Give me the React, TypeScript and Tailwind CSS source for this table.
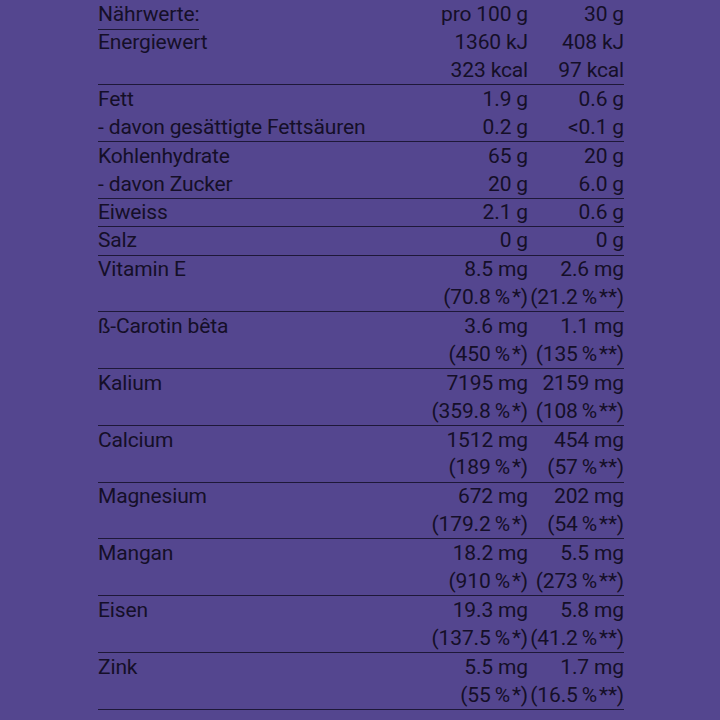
import React from 'react';

type Row = [string, string, string];

const groups: Row[][] = [
  [
    ['Energiewert', '1360 kJ', '408 kJ'],
    ['', '323 kcal', '97 kcal'],
  ],
  [
    ['Fett', '1.9 g', '0.6 g'],
    ['- davon gesättigte Fettsäuren', '0.2 g', '<0.1 g'],
  ],
  [
    ['Kohlenhydrate', '65 g', '20 g'],
    ['- davon Zucker', '20 g', '6.0 g'],
  ],
  [['Eiweiss', '2.1 g', '0.6 g']],
  [['Salz', '0 g', '0 g']],
  [
    ['Vitamin E', '8.5 mg', '2.6 mg'],
    ['', '(70.8\u2009%\u200a*)', '(21.2\u2009%\u200a**)'],
  ],
  [
    ['ß-Carotin bêta', '3.6 mg', '1.1 mg'],
    ['', '(450\u2009%\u200a*)', '(135\u2009%\u200a**)'],
  ],
  [
    ['Kalium', '7195 mg', '2159 mg'],
    ['', '(359.8\u2009%\u200a*)', '(108\u2009%\u200a**)'],
  ],
  [
    ['Calcium', '1512 mg', '454 mg'],
    ['', '(189\u2009%\u200a*)', '(57\u2009%\u200a**)'],
  ],
  [
    ['Magnesium', '672 mg', '202 mg'],
    ['', '(179.2\u2009%\u200a*)', '(54\u2009%\u200a**)'],
  ],
  [
    ['Mangan', '18.2 mg', '5.5 mg'],
    ['', '(910\u2009%\u200a*)', '(273\u2009%\u200a**)'],
  ],
  [
    ['Eisen', '19.3 mg', '5.8 mg'],
    ['', '(137.5\u2009%\u200a*)', '(41.2\u2009%\u200a**)'],
  ],
  [
    ['Zink', '5.5 mg', '1.7 mg'],
    ['', '(55\u2009%\u200a*)', '(16.5\u2009%\u200a**)'],
  ],
];

function TableRow({ row, last }: { row: Row; last: boolean }) {
  return (
    <div
      className={`grid grid-cols-[1fr_140px_96px] h-[28.4px] items-center leading-none ${
        last ? 'border-b-[1.5px] border-[#1e1838]' : ''
      }`}
    >
      <span className="whitespace-nowrap">{row[0]}</span>
      <span className="text-right whitespace-nowrap">{row[1]}</span>
      <span className="text-right whitespace-nowrap">{row[2]}</span>
    </div>
  );
}

export default function App() {
  return (
    <div className="w-[720px] h-[720px] bg-[#54468f] overflow-hidden">
      <div
        className="ml-[98px] w-[526px] text-[#150f28] text-[21px] tracking-[-0.15px]"
        style={{ fontFamily: 'Roboto, "Liberation Sans", sans-serif' }}
      >
        {/* Header */}
        <div className="grid grid-cols-[1fr_140px_96px] h-[28.4px] items-center leading-none">
          <span className="w-fit border-b-[1.5px] border-[#1e1838] pb-[4px] translate-y-[3px]">Nährwerte:</span>
          <span className="text-right">pro 100 g</span>
          <span className="text-right">30 g</span>
        </div>
        {groups.map((g, i) => (
          <div key={i}>
            {g.map((r, j) => (
              <TableRow key={j} row={r} last={j === g.length - 1} />
            ))}
          </div>
        ))}
      </div>
    </div>
  );
}
